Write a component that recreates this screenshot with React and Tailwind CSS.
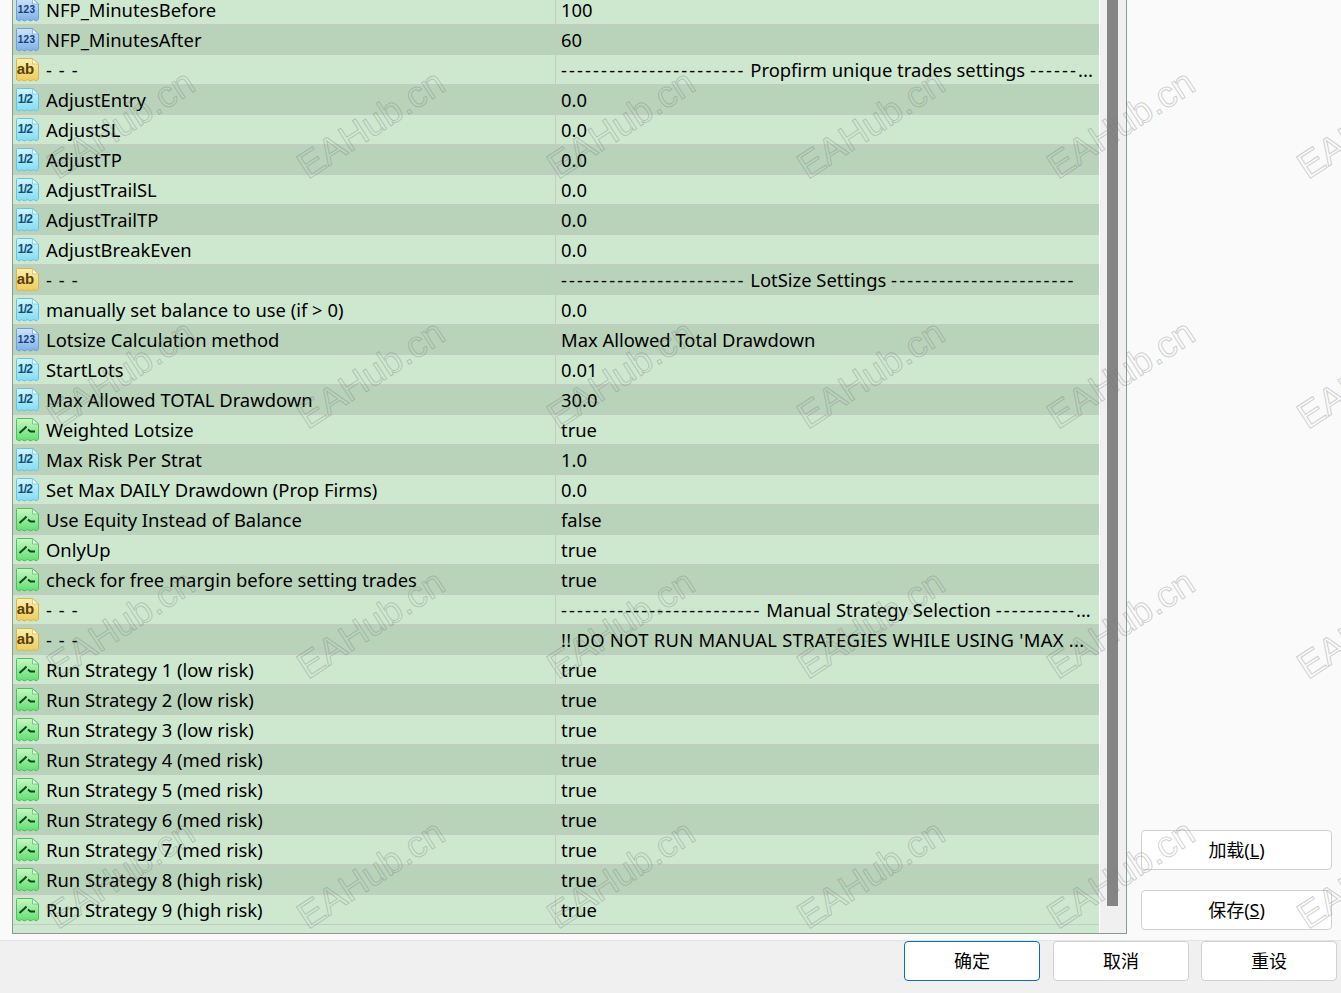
const rows = [
  ['n', 'NFP_MinutesBefore', '100'],
  ['n', 'NFP_MinutesAfter', '60'],
  ['s', '- - -', '----------------------- Propfirm unique trades settings ------...'],
  ['d', 'AdjustEntry', '0.0'],
  ['d', 'AdjustSL', '0.0'],
  ['d', 'AdjustTP', '0.0'],
  ['d', 'AdjustTrailSL', '0.0'],
  ['d', 'AdjustTrailTP', '0.0'],
  ['d', 'AdjustBreakEven', '0.0'],
  ['s', '- - -', '----------------------- LotSize Settings -----------------------'],
  ['d', 'manually set balance to use (if > 0)', '0.0'],
  ['n', 'Lotsize Calculation method', 'Max Allowed Total Drawdown'],
  ['d', 'StartLots', '0.01'],
  ['d', 'Max Allowed TOTAL Drawdown', '30.0'],
  ['b', 'Weighted Lotsize', 'true'],
  ['d', 'Max Risk Per Strat', '1.0'],
  ['d', 'Set Max DAILY Drawdown (Prop Firms)', '0.0'],
  ['b', 'Use Equity Instead of Balance', 'false'],
  ['b', 'OnlyUp', 'true'],
  ['b', 'check for free margin before setting trades', 'true'],
  ['s', '- - -', '------------------------- Manual Strategy Selection ----------...'],
  ['s', '- - -', "!! DO NOT RUN MANUAL STRATEGIES WHILE USING 'MAX ..."],
  ['b', 'Run Strategy 1 (low risk)', 'true'],
  ['b', 'Run Strategy 2 (low risk)', 'true'],
  ['b', 'Run Strategy 3 (low risk)', 'true'],
  ['b', 'Run Strategy 4 (med risk)', 'true'],
  ['b', 'Run Strategy 5 (med risk)', 'true'],
  ['b', 'Run Strategy 6 (med risk)', 'true'],
  ['b', 'Run Strategy 7 (med risk)', 'true'],
  ['b', 'Run Strategy 8 (high risk)', 'true'],
  ['b', 'Run Strategy 9 (high risk)', 'true'],
]

const iconColors = {
  n: { top: '#cfe3f8', bottom: '#7fb0e8', edge: '#6c9fdb', ink: '#14407f' },
  s: { top: '#fbefb0', bottom: '#eecb5c', edge: '#d8b64c', ink: '#5a4208' },
  d: { top: '#d0f3fb', bottom: '#84dcf2', edge: '#66c4e2', ink: '#0f4f78' },
  b: { top: '#c8f8c2', bottom: '#62dd72', edge: '#4cc05c', ink: '#0b4a18' },
}

function TypeIcon({ type }) {
  const c = iconColors[type]
  const id = `grad-${type}`
  return (
    <svg width="25" height="25" viewBox="0 0 25 25" className="shrink-0">
      <defs>
        <linearGradient id={id} x1="0" y1="0" x2="0" y2="1">
          <stop offset="0" stopColor={c.top} />
          <stop offset="1" stopColor={c.bottom} />
        </linearGradient>
      </defs>
      <path
        d="M1.5 2.5q0-1 1-1h15l6 5.5v15l-2 2-3-1.5-3 1.5-3-1.5-3 1.5-3-1.5-2 1.5-3-1.5z"
        fill={`url(#${id})`}
        stroke={c.edge}
        strokeWidth="1"
        strokeLinejoin="round"
      />
      <path d="M17.5 1.5v5.5h6z" fill="#ffffff" fillOpacity="0.7" stroke={c.edge} strokeWidth="0.7" />
      {type === 'n' && (
        <text x="11.5" y="15.5" textAnchor="middle" fontSize="10" fontWeight="700" letterSpacing="0.3" fontFamily="'Liberation Sans', sans-serif" fill={c.ink}>123</text>
      )}
      {type === 's' && (
        <text x="10.5" y="17" textAnchor="middle" fontSize="15" fontWeight="700" fontFamily="'Liberation Sans', sans-serif" fill={c.ink}>ab</text>
      )}
      {type === 'd' && (
        <text x="10" y="15.5" textAnchor="middle" fontSize="12" fontWeight="700" letterSpacing="-0.7" fontFamily="'Liberation Sans', sans-serif" fill={c.ink}>1/2</text>
      )}
      {type === 'b' && (
        <path d="M4.5 16l5-4.5 2-2M13 12.5l2.5 2h4.5" fill="none" stroke={c.ink} strokeWidth="2" />
      )}
    </svg>
  )
}

// the reference font draws hyphens wider than Noto does
function Dashed({ text }) {
  return text.split(/(-+)/).map((part, i) =>
    part.startsWith('-') ? <span key={i} className="tracking-[2.1px]">{part}</span> : part
  )
}

function Row({ row, dark }) {
  const [type, name, value] = row
  return (
    <div className={`flex h-[30px] shrink-0 items-center border-b border-[#c6c9c6] text-[18.4px] text-black ${dark ? 'bg-[#b9d3bb]' : 'bg-[#cee8d0]'}`}>
      <div className="flex h-full w-[543px] shrink-0 items-center gap-[6px] border-r border-[#c6c9c6] pl-[2px]">
        <TypeIcon type={type} />
        <span className="whitespace-nowrap"><Dashed text={name} /></span>
      </div>
      <span className={`whitespace-nowrap pl-[5px] ${value.startsWith('!!') ? 'tracking-[0.27px]' : ''}`}><Dashed text={value} /></span>
    </div>
  )
}

function Button({ children, className }) {
  return (
    <button className={`flex h-10 items-center justify-center rounded-[4px] border bg-white text-[18px] text-black ${className}`}>
      {children}
    </button>
  )
}

function Watermarks() {
  const spots = []
  for (const top of [151, 401, 651, 901]) {
    for (const left of [51, 301, 551, 801, 1051, 1301]) {
      spots.push([left, top])
    }
  }
  return (
    <div className="pointer-events-none absolute inset-0 overflow-hidden">
      {spots.map(([left, top]) => (
        <span
          key={`${left}-${top}`}
          className="absolute origin-left -rotate-[33deg] whitespace-nowrap font-['Liberation_Sans',sans-serif] text-[37px] leading-none text-transparent [-webkit-text-stroke:1px_rgba(120,120,120,0.35)]"
          style={{ left, top }}
        >
          EAHub.cn
        </span>
      ))}
    </div>
  )
}

export default function App() {
  return (
    <div className="relative flex h-[993px] w-[1341px] flex-col overflow-hidden bg-[#f0f0f0] font-['Noto_Sans','Noto_Sans_CJK_SC',sans-serif]">
      <div className="flex h-[941px] shrink-0 border-b border-[#e4e4e4] bg-[#fafafa] pl-3">
        <div className="flex h-[934px] w-[1115px] shrink-0 border-x border-b border-[#8a9a96]">
          <div className="-mt-[5px] flex h-[938px] w-[1086px] shrink-0 flex-col overflow-hidden bg-[#cee8d0]">
            {rows.map((row, i) => (
              <Row key={i} row={row} dark={i % 2 === 1} />
            ))}
          </div>
          <div className="flex w-[27px] shrink-0 justify-center border-l border-white bg-[#f0f0f0]">
            <div className="ml-[-1px] h-[906px] w-[11px] bg-[#858585]" />
          </div>
        </div>
        <div className="flex flex-1 flex-col justify-end gap-5 pb-[10px] pl-[14px] pr-[9px]">
          <Button className="border-[#d0d0d0]">加载(<u>L</u>)</Button>
          <Button className="border-[#d0d0d0]">保存(<u>S</u>)</Button>
        </div>
      </div>
      <div className="flex justify-end pr-1">
        <Button className="mr-[13px] w-[136px] border-[#0f6cbd]">确定</Button>
        <Button className="mr-3 w-[136px] border-[#d0d0d0]">取消</Button>
        <Button className="w-[136px] border-[#d0d0d0]">重设</Button>
      </div>
      <Watermarks />
    </div>
  )
}
